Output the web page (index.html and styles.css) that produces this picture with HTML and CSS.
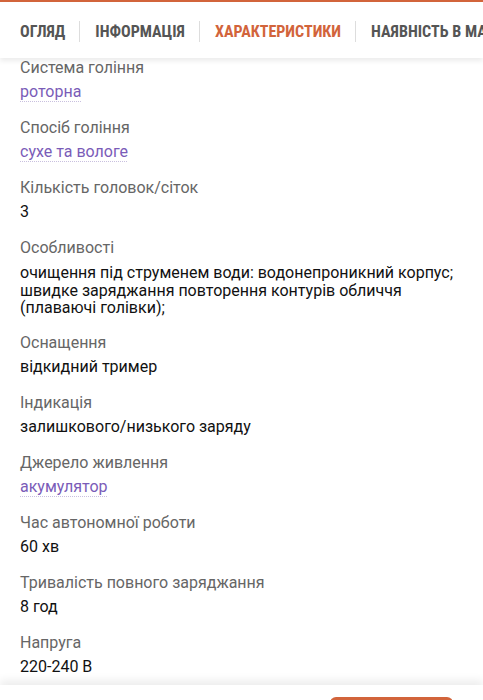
FILE: index.html
```html
<!DOCTYPE html>
<html lang="uk">
<head>
<meta charset="utf-8">
<title>Характеристики</title>
<link rel="stylesheet" href="styles.css">
</head>
<body>
<div class="page">
  <header class="tabs">
    <span class="tab">Огляд</span>
    <span class="sep"></span>
    <span class="tab">Інформація</span>
    <span class="sep"></span>
    <span class="tab active">Характеристики</span>
    <span class="sep"></span>
    <span class="tab">Наявність в магазинах</span>
  </header>
  <main class="specs">
    <div class="row"><div class="label">Система гоління</div><div class="value link"><span>роторна</span></div></div>
    <div class="row"><div class="label">Спосіб гоління</div><div class="value link"><span>сухе та вологе</span></div></div>
    <div class="row"><div class="label">Кількість головок/сіток</div><div class="value">3</div></div>
    <div class="row"><div class="label">Особливості</div><div class="value multi">очищення під струменем води: водонепроникний корпус; швидке заряджання повторення контурів обличчя (плаваючі голівки);</div></div>
    <div class="row"><div class="label">Оснащення</div><div class="value">відкидний тример</div></div>
    <div class="row"><div class="label">Індикація</div><div class="value">залишкового/низького заряду</div></div>
    <div class="row"><div class="label">Джерело живлення</div><div class="value link"><span>акумулятор</span></div></div>
    <div class="row"><div class="label">Час автономної роботи</div><div class="value">60 хв</div></div>
    <div class="row"><div class="label">Тривалість повного заряджання</div><div class="value">8 год</div></div>
    <div class="row"><div class="label">Напруга</div><div class="value">220-240 В</div></div>
  </main>
  <footer class="bottom">
    <span class="buy"></span>
  </footer>
</div>
</body>
</html>
```
FILE: styles.css
```css
html, body {
  margin: 0;
  padding: 0;
  background: #ffffff;
}
.page {
  width: 483px;
  height: 700px;
  overflow: hidden;
  display: flex;
  flex-direction: column;
  font-family: Roboto, "Liberation Sans", sans-serif;
}
.tabs {
  position: relative;
  z-index: 2;
  flex: 0 0 auto;
  box-sizing: border-box;
  height: 58px;
  padding-top: 3px;
  border-top: 2px solid #d2643b;
  background: #ffffff;
  box-shadow: 0 3px 5px rgba(0, 0, 0, 0.08);
  display: flex;
  align-items: center;
  padding-left: 20px;
  white-space: nowrap;
  overflow: hidden;
}
.tab {
  flex: 0 0 auto;
  font-size: 16px;
  font-weight: 700;
  font-stretch: 75%;
  text-transform: uppercase;
  color: #555555;
  line-height: 20px;
}
.tab.active {
  color: #d2643b;
}
.sep {
  flex: 0 0 auto;
  width: 1px;
  height: 21px;
  margin: 0 15px 0 14px;
  background: #dddddd;
}
.specs {
  flex: 1 1 auto;
  min-height: 0;
  overflow: hidden;
  margin-top: -2px;
  padding: 0 20px;
  position: relative;
  z-index: 1;
}
.row {
  margin-bottom: 12px;
}
.label {
  font-size: 16px;
  line-height: 24px;
  color: #666666;
}
.value {
  font-size: 16px;
  line-height: 24px;
  color: #111111;
}
.value.multi {
  line-height: 17.5px;
  padding-top: 4px;
  padding-bottom: 2px;
}
.value.link span {
  color: #7a5cb8;
  text-decoration: underline dotted #c9c0df;
  text-decoration-thickness: 1px;
  text-underline-offset: 4px;
}
.bottom {
  position: relative;
  z-index: 2;
  flex: 0 0 15px;
  height: 15px;
  min-height: 0;
  overflow: visible;
  background: #ffffff;
  box-shadow: 0 -5px 9px rgba(0, 0, 0, 0.07);
  display: flex;
  justify-content: flex-end;
  align-items: flex-start;
  padding-right: 30px;
}
.buy {
  flex: 0 0 auto;
  margin-top: 12px;
  width: 123px;
  height: 20px;
  border-radius: 6px;
  background: #d2643b;
}
```
